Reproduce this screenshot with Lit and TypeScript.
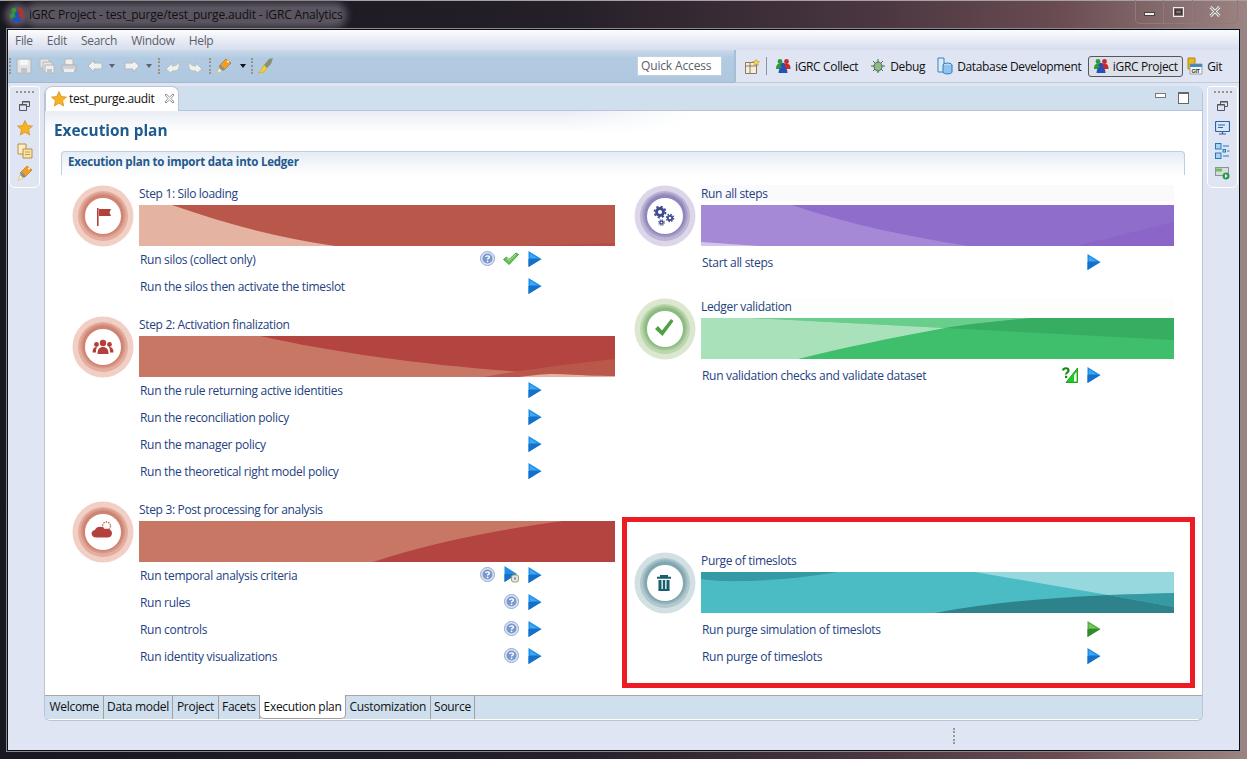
import { LitElement, html, css, svg } from "lit";
import { customElement } from "lit/decorators.js";

type Layer = [string, string];

interface Row {
  label: string;
  icons: string[];
}

interface Step {
  title: string;
  glyph: string;
  palette: string[];
  base: string;
  layers: Layer[];
  rows: Row[];
  offset?: boolean;
  tint?: string;
  push?: boolean;
}

const RED = ["#f2cfc4", "#e3ae9f", "#d99887", "#cf8373"];
const PURPLE = ["#dcd6e8", "#bdb4d6", "#a69cc8", "#8f86b9"];
const GREEN = ["#dbe8cf", "#bcd6ae", "#a3c896", "#8cbb80"];
const TEAL = ["#d2e0e4", "#b0c8ce", "#98b6bd", "#82a6ae"];

const leftSteps: Step[] = [
  {
    title: "Step 1: Silo loading",
    glyph: "flag",
    palette: RED,
    base: "#b9574a",
    layers: [
      ["#e4b3a2", "M0 0H33C90 20 140 33 196 41H0Z"],
      ["#b84b45", "M380 41L476 38V41Z"],
    ],
    rows: [
      { label: "Run silos (collect only)", icons: ["help", "check", "play"] },
      { label: "Run the silos then activate the timeslot", icons: ["", "", "play"] },
    ],
  },
  {
    title: "Step 2: Activation finalization",
    glyph: "people",
    palette: RED,
    base: "#b3443f",
    layers: [
      ["#c97765", "M0 0H121C220 22 340 36 476 41H0Z"],
      ["#b9574a", "M345 41C390 33 430 28 476 23V41Z"],
      ["#e7b3a0", "M381 41C395 39 405 38 415 38C440 39 460 40 476 40V41Z"],
    ],
    rows: [
      { label: "Run the rule returning active identities", icons: ["", "", "play"] },
      { label: "Run the reconciliation policy", icons: ["", "", "play"] },
      { label: "Run the manager policy", icons: ["", "", "play"] },
      { label: "Run the theoretical right model policy", icons: ["", "", "play"] },
    ],
  },
  {
    title: "Step 3: Post processing for analysis",
    glyph: "cloud",
    palette: RED,
    base: "#c97765",
    layers: [["#b3443f", "M234 41C290 22 360 8 425 0H476V41Z"]],
    rows: [
      { label: "Run temporal analysis criteria", icons: ["help", "temporal", "play"] },
      { label: "Run rules", icons: ["", "help", "play"] },
      { label: "Run controls", icons: ["", "help", "play"] },
      { label: "Run identity visualizations", icons: ["", "help", "play"] },
    ],
  },
];

const rightSteps: Step[] = [
  {
    title: "Run all steps",
    glyph: "gears",
    palette: PURPLE,
    base: "#8f6dcb",
    tint: "#fafafd",
    offset: true,
    layers: [
      ["#a588d6", "M0 0H91C150 20 210 32 267 41H0Z"],
      ["#d5c4ea", "M0 37L58 41H0Z"],
      ["#8b66c8", "M375 41L473 17V41Z"],
    ],
    rows: [{ label: "Start all steps", icons: ["", "", "play"] }],
  },
  {
    title: "Ledger validation",
    glyph: "tick",
    palette: GREEN,
    base: "#3fbe6b",
    tint: "#fcfefc",
    offset: true,
    layers: [
      ["#69cd8c", "M50 0H331C300 3 270 6 244 10Z"],
      ["#a9e2ba", "M0 0H50L244 10C190 20 140 30 97 41H0Z"],
      ["#37ad62", "M244 10C270 6 300 3 331 0H473V22Z"],
    ],
    rows: [{ label: "Run validation checks and validate dataset", icons: ["", "ratio", "play"] }],
  },
  {
    title: "Purge of timeslots",
    glyph: "trash",
    palette: TEAL,
    base: "#4bbcc4",
    offset: true,
    push: true,
    layers: [
      ["#369aa4", "M0 0H137C90 8 30 12 0 7Z"],
      ["#97d8de", "M274 0L407 23L473 21V0Z"],
      ["#2e828c", "M234 41C290 30 350 26 407 23L473 35V41Z"],
      ["#369aa4", "M407 23L473 21V35Z"],
    ],
    rows: [
      { label: "Run purge simulation of timeslots", icons: ["", "", "playGreen"] },
      { label: "Run purge of timeslots", icons: ["", "", "play"] },
    ],
  },
];

const PAGES = ["Welcome", "Data model", "Project", "Facets", "Execution plan", "Customization", "Source"];

const people = (size = 16) => html`<svg width=${size} height=${size} viewBox="0 0 16 16">
  <circle cx="5" cy="3.5" r="2.4" fill="#2f9a35" />
  <path d="M1 11c0-4 1.5-5.5 4-5.5S9 7 9 11z" fill="#2f9a35" />
  <circle cx="11.5" cy="3.5" r="2.4" fill="#c92a2a" />
  <path d="M8 11c0-4 1-5.5 3.5-5.5S15.500 7 15.500 11z" fill="#c92a2a" />
  <circle cx="8" cy="7" r="2.300" fill="#2450b8" />
  <path d="M3.500 15c0-4 1.500-6 4.500-6s4.500 2 4.500 6z" fill="#2450b8" />
</svg>`;

const icons: Record<string, () => unknown> = {
  play: () => html`<svg width="14" height="16" viewBox="0 0 14 16">
    <path d="M.5 0L13.500 8L.5 16z" fill="#1f8ee8" />
    <path d="M.5 8H13.500L.5 16z" fill="#1670c8" />
    <path d="M2 2.500L9 7H2z" fill="#3fa8f2" />
  </svg>`,
  playGreen: () => html`<svg width="14" height="16" viewBox="0 0 14 16">
    <path d="M.5 0L13.500 8L.5 16z" fill="#55b03f" />
    <path d="M.5 8H13.500L.5 16z" fill="#2f8a2c" />
    <path d="M2 2.500L9 7H2z" fill="#78c75c" />
  </svg>`,
  help: () => html`<svg width="15" height="15" viewBox="0 0 15 15">
    <circle cx="7.500" cy="7.500" r="7" fill="#dbe5f5" stroke="#90a8d2" />
    <circle cx="7.500" cy="7.500" r="5" fill="#7a98cc" />
    <path d="M5.600 6c.2-1.400 3.800-1.700 3.800.2 0 1.200-1.900 1.200-1.900 2.400" fill="none" stroke="#fff" stroke-width="1.400" />
    <rect x="6.800" y="9.600" width="1.500" height="1.500" fill="#fff" />
  </svg>`,
  check: () => html`<svg width="16" height="14" viewBox="0 0 16 14">
    <path d="M.5 7.500L3.500 5L6 7.500L13 1L15.500 2.500L6.200 12.500z" fill="#66c852" stroke="#3a8a35" stroke-width=".8" />
    <path d="M3.500 6L6 8.500L13 2.200" fill="none" stroke="#b2eca0" stroke-width=".8" />
  </svg>`,
  temporal: () => html`<svg width="15" height="17" viewBox="0 0 15 17">
    <path d="M.5 0L13 8L.5 16z" fill="#1f8ee8" />
    <path d="M.5 8H13L.5 16z" fill="#1670c8" />
    <rect x="7.500" y="9" width="7" height="7" rx="2" fill="#dfe5ea" stroke="#b39a55" />
    <rect x="10" y="11.500" width="2" height="2" fill="#7a93a8" />
  </svg>`,
  ratio: () => html`<svg width="16" height="16" viewBox="0 0 16 16">
    <path d="M4 15.500L15.500 1V15.500z" fill="#19d019" stroke="#128a12" stroke-width=".8" />
    <path d="M12 14.500V8L14.500 5V14.500z" fill="#fff" />
    <path d="M1 3.500C1.500 .5 6.500.5 6.500 3.500C6.500 5.500 4 5.500 4 7.500" fill="none" stroke="#128a12" stroke-width="2.200" />
    <rect x="3" y="8.800" width="2.200" height="2.200" fill="#128a12" />
  </svg>`,
};

const glyphs: Record<string, () => unknown> = {
  flag: () => svg`<rect x="25" y="23" width="1.600" height="18" fill="#b3403c" />
    <path d="M27 24H39L37.500 27.500L39 31H27z" fill="#b3403c" />`,
  people: () => svg`<g fill="#b3403c">
    <circle cx="31" cy="27" r="3.200" /><path d="M25.500 38c0-5 2-7 5.500-7s5.500 2 5.500 7z" />
    <circle cx="24.500" cy="28.500" r="2.400" /><path d="M20.500 36.500c0-3.800 1.500-5.500 4.500-5.500-.8 1.500-1 3.500-1 5.500z" />
    <circle cx="37.500" cy="28.500" r="2.400" /><path d="M41.500 36.500c0-3.800-1.500-5.500-4.500-5.500.8 1.500 1 3.500 1 5.500z" />
  </g>`,
  cloud: () => svg`<circle cx="34.500" cy="25" r="4" fill="none" stroke="#c9665c" stroke-width="1.400" stroke-dasharray="1.500 1" />
    <path d="M24.500 36.500c-6 0-6.500-7-1.500-7.500 1-3.500 7-4.500 9.500-1 4-1 7.500 1 7.500 4.200 0 2.800-2 4.300-4.500 4.300z" fill="#b3403c" />`,
  gears: () => svg`<g fill="none" stroke="#3f4a90">
    <circle cx="26" cy="27" r="3.500" stroke-width="2.800" />
    <circle cx="26" cy="27" r="5.500" stroke-width="1.800" stroke-dasharray="2.200 2.100" />
    <circle cx="36" cy="33" r="2.200" stroke-width="1.800" />
    <circle cx="36" cy="33" r="3.600" stroke-width="1.400" stroke-dasharray="1.500 1.300" />
    <circle cx="27.500" cy="37.500" r="1.600" stroke-width="1.500" />
    <circle cx="27.500" cy="37.500" r="2.800" stroke-width="1.100" stroke-dasharray="1.100 1.100" />
  </g>`,
  tick: () => svg`<path d="M21 31L24 28L28 32.500L37 21L39.500 23L28.500 38z" fill="#4fa043" />`,
  trash: () => svg`<g fill="#15606c">
    <path d="M26 23h8v1.800h-8zM23 24.800h14v2H23z" />
    <path d="M24.500 28h3v9.500h-3zM28.800 28h2.400v9.500h-2.400zM32.500 28h3v9.500h-3z" />
    <path d="M24.500 37h11v2h-11z" />
  </g>`,
};

const toolIcon = (kind: string) => {
  switch (kind) {
    case "save":
      return html`<svg width="16" height="16" viewBox="0 0 16 16"><path d="M1 1h14v14H1z" fill="#e2e4e6" stroke="#b4b6ba" /><path d="M4 2h8v5H4z" fill="#f6f6f6" /><path d="M5 10h6v5H5z" fill="#c2c4c8" /></svg>`;
    case "saveAll":
      return html`<svg width="16" height="16" viewBox="0 0 16 16"><path d="M1 1h9v9H1z" fill="#e2e4e6" stroke="#b8babc" /><path d="M4 4h9v9H4z" fill="#e2e4e6" stroke="#b8babc" /><path d="M6 7h9v8H6z" fill="#eceef0" stroke="#b4b6ba" /><path d="M8 11h5v4H8z" fill="#c2c4c8" /></svg>`;
    case "print":
      return html`<svg width="16" height="16" viewBox="0 0 16 16"><path d="M4 1h8v6H4z" fill="#f0f0f0" stroke="#b8b8b8" /><path d="M1 7h14v6H1z" fill="#d0d3d6" stroke="#b0b2b6" /><path d="M3 11h10v3H3z" fill="#eeeeee" /></svg>`;
    case "back":
      return html`<svg width="16" height="14" viewBox="0 0 16 14"><path d="M7 1L1 7l6 6V10h8V4H7z" fill="#eef0f2" stroke="#b4b8bc" /></svg>`;
    case "forward":
      return html`<svg width="16" height="14" viewBox="0 0 16 14"><path d="M9 1l6 6-6 6V10H1V4h8z" fill="#eef0f2" stroke="#b4b8bc" /></svg>`;
    case "undo":
      return html`<svg width="16" height="16" viewBox="0 0 16 16"><path d="M1 11l6-6v3c4 0 6-1 6-5 3 5 1 11-6 10v3z" fill="#eef0f2" stroke="#b8bcc0" /></svg>`;
    case "redo":
      return html`<svg width="16" height="16" viewBox="0 0 16 16"><path d="M15 11L9 5v3C5 8 3 7 3 3c-3 5-1 11 6 10v3z" fill="#eef0f2" stroke="#b8bcc0" /></svg>`;
    case "brush":
      return html`<svg width="18" height="18" viewBox="0 0 18 18"><path d="M11 2l5 4-7 7-5-4z" fill="#f0a020" stroke="#a86a10" stroke-width=".6" /><path d="M6 8l4 4-2 2-4-3z" fill="#8a8f96" /><path d="M4 11l3 3-5 2.500z" fill="#fff4c0" stroke="#c8b060" stroke-width=".5" /><circle cx="13" cy="4.500" r="1" fill="#fff" /></svg>`;
    case "pen":
      return html`<svg width="18" height="18" viewBox="0 0 18 18"><path d="M12 2l4-1-2 6-4 4-3-3z" fill="#8a9078" /><path d="M7 8l3 3-3 4-6 1c2-1 4-4 6-8z" fill="#f5d02c" stroke="#c8a010" stroke-width=".5" /></svg>`;
    case "open":
      return html`<svg width="15" height="15" viewBox="0 0 15 15"><path d="M.5 3.500h11v11H.5z" fill="#f4efe0" stroke="#8a7a5a" /><path d="M.5 7h11M5 3.500v11" stroke="#8a7a5a" /><path d="M11 .5l1.200 1.800 2.300.3-1.700 1.500.5 2.300-2.300-1.200-2 1.200.3-2.300L7.500 2.600l2.400-.3z" fill="#f7d44a" stroke="#b08a20" stroke-width=".5" /></svg>`;
    case "bug":
      return html`<svg width="16" height="16" viewBox="0 0 16 16"><path d="M8 1v14M1 8h14M3 3l10 10M13 3L3 13" stroke="#4a6a4a" /><ellipse cx="8" cy="8.500" rx="4" ry="4.500" fill="#8fb98a" stroke="#4a6a4a" /></svg>`;
    case "db":
      return html`<svg width="16" height="18" viewBox="0 0 16 18"><path d="M1 1h6v14H1z" fill="#d9ecfa" stroke="#3a80c0" /><ellipse cx="10.500" cy="8" rx="4.500" ry="2" fill="#bcdcf5" stroke="#2f78bc" /><path d="M6 8v7c0 2.500 9 2.500 9 0V8" fill="#8fc4ee" stroke="#2f78bc" /></svg>`;
    case "git":
      return html`<svg width="16" height="18" viewBox="0 0 16 18"><path d="M1 1h7v11H1z" fill="#e8b820" stroke="#b08a10" /><path d="M3 7h12v10H3z" fill="#f4f6f8" stroke="#9aa2a8" /><path d="M3 7h12v3H3z" fill="#4a8ab8" /><text x="4.500" y="15.500" font-size="5.500" font-weight="700" font-family="Liberation Sans" fill="#333">GIT</text></svg>`;
    case "restore":
      return html`<svg width="11" height="10" viewBox="0 0 11 10"><path d="M3.500 3V.5h7v5H8M.5 3.500h7v6h-7z" fill="none" stroke="#555" /><path d="M.5 4h7M3.500 1h7" stroke="#555" /></svg>`;
    case "star":
      return html`<svg width="16" height="16" viewBox="0 0 16 16"><path d="M8 .5l2.300 5 5.200.6-3.900 3.500 1.100 5.400L8 12.300 3.300 15l1.100-5.400L.5 6.100l5.200-.6z" fill="#f5b324" stroke="#d98a14" stroke-width=".7" /></svg>`;
    case "files":
      return html`<svg width="16" height="16" viewBox="0 0 16 16"><path d="M1 1h8v10H1z" fill="#fbeec8" stroke="#b89040" /><path d="M6 6h9v9H6z" fill="#f8e4a8" stroke="#b89040" /><path d="M8 9h5M8 11.500h5" stroke="#c8a050" /></svg>`;
    case "monitor":
      return html`<svg width="15" height="14" viewBox="0 0 15 14"><rect x=".5" y=".5" width="14" height="10" rx="1" fill="#dbe8f6" stroke="#2d62a8" stroke-width="1.200" /><path d="M3 4h7M3 6.500h5" stroke="#2d62a8" /><path d="M4 13h7M7.500 10.500V13" stroke="#2d62a8" stroke-width="1.200" /></svg>`;
    case "outline":
      return html`<svg width="15" height="16" viewBox="0 0 15 16"><rect x=".5" y=".5" width="5.500" height="5.500" fill="#a8d4f2" stroke="#2878b8" /><rect x=".5" y="10" width="5.500" height="5.500" fill="#a8d4f2" stroke="#2878b8" /><rect x="8" y="6.500" width="2.500" height="2.500" fill="#a8d4f2" stroke="#2878b8" /><path d="M8 3h6M12 8h2.500M8 13h6" stroke="#2878b8" /></svg>`;
    case "run":
      return html`<svg width="15" height="13" viewBox="0 0 15 13"><rect x=".5" y=".5" width="13" height="8" fill="#d8dcdc" stroke="#8a9494" /><path d="M1 1.500h6v3H1z" fill="#6cc060" /><circle cx="11" cy="9" r="3.500" fill="#2f9a4a" /><path d="M10 7l2.500 2-2.500 2z" fill="#fff" /></svg>`;
  }
  return null;
};

@customElement("app-root")
export class AppRoot extends LitElement {
  static styles = css`
    :host {
      display: block;
      width: 1247px;
      height: 759px;
      overflow: hidden;
      font-family: "Open Sans", "Liberation Sans", sans-serif;
      font-size: 12px;
      position: relative;
      background: linear-gradient(90deg, #17171f 0%, #241f29 45%, #4a3640 70%, #6a4c52 85%, #9c8482 100%);
    }
    .frame {
      display: flex;
      flex-direction: column;
      height: 759px;
      box-shadow: inset 0 1px #a8a0a4;
    }
    .titlebar {
      height: 29px;
      flex: none;
      display: flex;
      align-items: center;
      padding: 0 9px 0 9px;
      gap: 4px;
    }
    .app-title {
      color: #111;
      background: #5a5560;
      box-shadow: 0 0 7px 5px #5a5560;
      border-radius: 8px;
      line-height: 16px;
      letter-spacing: -0.16px;
    }
    .title-logo {
      display: flex;
      background: #5a5560;
      box-shadow: 0 0 6px 4px #5a5560;
      border-radius: 8px;
    }
    .winbtns {
      margin-left: auto;
      display: flex;
      align-self: flex-start;
      height: 23px;
      border: 1px solid #8d7a7c;
      border-top: 0;
      border-radius: 0 0 5px 5px;
    }
    .winbtns span {
      display: flex;
      align-items: center;
      justify-content: center;
      border-right: 1px solid #8d7a7c;
      height: 100%;
    }
    .winbtns span:last-child {
      border-right: 0;
    }
    .window {
      flex: 1;
      margin: 0 7px 8px;
      background: #dfe5f3;
      border: 1px solid #0c0c10;
      display: flex;
      flex-direction: column;
      box-shadow: 0 0 0 1px #8c8890;
    }
    .menubar {
      height: 20px;
      flex: none;
      display: flex;
      align-items: center;
      gap: 14px;
      padding-left: 7px;
      color: #5c5f68;
      letter-spacing: -0.3px;
      background: linear-gradient(#fbfcfe, #d7dded);
    }
    .toolrow {
      height: 33px;
      flex: none;
      display: flex;
    }
    .toolbar {
      width: 726px;
      flex: none;
      display: flex;
      align-items: center;
      background: linear-gradient(#c9d9e8 0, #b2cbe2 25%, #afc8e0 100%);
      border-bottom: 1px solid #a8b8cc;
      position: relative;
    }
    .grip {
      width: 0;
      height: 16px;
      border-left: 2px dotted #98938a;
      flex: none;
    }
    .tslot {
      flex: none;
      display: flex;
      justify-content: center;
    }
    .drop {
      width: 0;
      height: 0;
      border: 3.500px solid transparent;
      border-top: 4px solid #5c6470;
      border-bottom: 0;
      flex: none;
    }
    .drop.black {
      border-top-color: #111;
    }
    .gap {
      flex: none;
    }
    .quick {
      width: 85px;
      height: 20px;
      box-sizing: border-box;
      background: #fff;
      border: 1px solid #c4d0dc;
      color: #5a6068;
      line-height: 18px;
      padding-left: 3px;
      letter-spacing: -0.15px;
      margin-left: auto;
      margin-right: 12px;
    }
    .perspectives {
      flex: 1;
      display: flex;
      align-items: center;
      padding-left: 9px;
      border-bottom: 1px solid #c0cbdc;
      border-left: 2px solid #a8bdd6;
      color: #111;
      letter-spacing: -0.35px;
    }
    .persp {
      display: flex;
      align-items: center;
      gap: 4px;
      height: 21px;
      box-sizing: border-box;
      white-space: nowrap;
    }
    .persp.on {
      background: #dde2ea;
      border: 1px solid #55585c;
      border-radius: 3px;
      padding: 0 4.500px 0 3.500px;
    }
    .vsep {
      width: 1px;
      height: 18px;
      background: #8b96a6;
      margin: 0 8px 0 6px;
    }
    .body {
      flex: 1;
      display: flex;
      padding: 3px 1px 0 1px;
      min-height: 0;
    }
    .trim {
      width: 31px;
      height: 102px;
      flex: none;
      box-sizing: border-box;
      border: 1px solid #fff;
      border-radius: 3px 3px 6px 6px;
      display: flex;
      flex-direction: column;
      align-items: center;
      padding-top: 4px;
    }
    .trim .dots {
      width: 18px;
      height: 0;
      border-top: 2px dotted #9a968e;
      margin-bottom: 6px;
    }
    .trim .cell {
      height: 22.500px;
      flex: none;
      display: flex;
      align-items: center;
    }
    .trim .cell.small {
      height: 14px;
      margin-bottom: 4px;
    }
    .trim.left {
      margin-right: 4px;
    }
    .trim.right {
      margin-left: 4px;
    }
    .center {
      flex: 1;
      display: flex;
      flex-direction: column;
      min-width: 0;
    }
    .editor {
      height: 635px;
      flex: none;
      box-sizing: border-box;
      display: flex;
      flex-direction: column;
      border: 1px solid #b9c4d6;
      border-width: 0 1px 1px 1px;
      border-radius: 8px 8px 6px 6px;
      background: #fff;
      padding-bottom: 1px;
      overflow: hidden;
    }
    .tabs {
      height: 25px;
      flex: none;
      display: flex;
      align-items: flex-end;
      background: #cfdfed;
      border-bottom: 1px solid #b9c4d6;
      box-sizing: border-box;
    }
    .tab {
      width: 134px;
      box-sizing: border-box;
      height: 25px;
      margin-bottom: -1px;
      display: flex;
      align-items: center;
      gap: 2px;
      padding: 0 0 1px 5px;
      color: #111;
      background: #fff;
      border: 1px solid #b9c4d6;
      border-bottom: 0;
      border-radius: 7px 7px 0 0;
      letter-spacing: -0.35px;
      flex: none;
    }
    .tab .close {
      margin-left: 8px;
      display: flex;
    }
    .viewbtns {
      margin-left: auto;
      align-self: center;
      display: flex;
      gap: 12px;
      padding-right: 13px;
      align-items: center;
    }
    .min {
      width: 9px;
      height: 3px;
      border: 1px solid #777;
      background: #fff;
      margin-top: -6px;
    }
    .max {
      width: 9px;
      height: 9px;
      border: 1px solid #666;
      border-top-width: 2px;
      background: #fff;
    }
    .page {
      flex: 1;
      min-height: 0;
    }
    .heading {
      height: 39px;
      box-sizing: border-box;
      padding: 10px 0 0 9px;
      font-size: 15.400px;
      line-height: 20px;
      font-weight: 700;
      color: #1d5a8e;
      background: linear-gradient(180deg, #e9edf4 0%, #fff 55%);
      -webkit-mask-image: linear-gradient(90deg, #000 0, #000 45%, transparent 56%);
      mask-image: linear-gradient(90deg, #000 0, #000 45%, transparent 56%);
    }
    .heading-text {
      margin: 0;
      font: inherit;
    }
    .plan {
      margin: 1px 17px 0 16px;
    }
    .plan-head {
      height: 24px;
      box-sizing: border-box;
      padding: 1px 0 0 6px;
      line-height: 18px;
      font-size: 11.500px;
      font-weight: 700;
      color: #1d5a8e;
      border: 1px solid #bfcfe0;
      border-bottom: 0;
      border-radius: 4px 4px 0 0;
      background: linear-gradient(#e6ecf4, #fff);
      letter-spacing: -0.22px;
    }
    .columns {
      display: grid;
      grid-template-columns: 543px 540px;
      column-gap: 19px;
      padding: 10px 0 0 11px;
    }
    .column {
      display: flex;
      flex-direction: column;
      gap: 16px;
      height: 485px;
    }
    .column.right {
      gap: 22px;
    }
    .step {
      display: grid;
      grid-template-columns: 62px 1fr;
      column-gap: 5px;
    }
    .step.push {
      margin-top: auto;
    }
    .badge {
      width: 62px;
      height: 62px;
      display: block;
    }
    .step-title {
      height: 16px;
      line-height: 18px;
      margin-bottom: 4px;
      color: #24417f;
      letter-spacing: -0.33px;
    }
    .banner {
      display: block;
      width: 100%;
      height: 41px;
    }
    .rows.offset {
      margin-top: 3px;
    }
    .row {
      height: 27px;
      display: flex;
      align-items: center;
      padding: 0 68px 0 1px;
      color: #24417f;
      letter-spacing: -0.3px;
    }
    .actions {
      margin-left: auto;
      margin-top: -2px;
      display: flex;
    }
    .slot {
      width: 24px;
      height: 17px;
      display: flex;
      align-items: center;
      justify-content: center;
    }
    .pages {
      height: 24px;
      flex: none;
      display: flex;
      background: #cfdfed;
      padding-left: 1px;
      color: #111;
      border-top: 1px solid #a8a8a8;
      box-sizing: border-box;
    }
    .pg {
      padding: 0 3.500px;
      line-height: 22px;
      border-right: 1px solid #a0a0a0;
      letter-spacing: -0.3px;
    }
    .pg.on {
      background: #fff;
      margin-top: -1px;
      line-height: 24px;
      border-left: 1px solid #a0a0a0;
      border-bottom: 1px solid #a0a0a0;
      border-radius: 0 0 5px 5px;
      height: 24px;
      margin-left: -1px;
      box-sizing: border-box;
    }
    .status {
      flex: 1;
      display: flex;
      align-items: center;
      padding-left: 909px;
    }
    .sash {
      height: 16px;
      width: 0;
      border-left: 2px dotted #9a9a94;
    }
    .highlight {
      position: absolute;
      left: 622px;
      top: 517px;
      width: 573px;
      height: 171px;
      box-sizing: border-box;
      border: 5px solid #ed1c24;
      pointer-events: none;
    }
  `;

  private badge(step: Step) {
    const p = step.palette;
    return html`<svg class="badge" viewBox="0 0 62 62">
      <circle cx="31" cy="31" r="30.500" fill=${p[0]} />
      <circle cx="31" cy="31" r="25" fill=${p[1]} />
      <circle cx="31" cy="30" r="22.500" fill=${p[2]} />
      <circle cx="31" cy="30" r="20.500" fill=${p[3]} />
      <circle cx="31" cy="31" r="18" fill="#fff" />
      ${glyphs[step.glyph]()}
    </svg>`;
  }

  private renderStep(step: Step) {
    return html`<section class="step ${step.push ? "push" : ""}">
      ${this.badge(step)}
      <div>
        <div class="step-title" style=${step.tint ? `background:${step.tint}` : ""}>${step.title}</div>
        <svg class="banner" viewBox="0 0 ${step.offset ? 473 : 476} 41" preserveAspectRatio="none">
          <rect width="476" height="41" fill=${step.base} />
          ${step.layers.map((l) => svg`<path fill=${l[0]} d=${l[1]} />`)}
        </svg>
        <div class="rows ${step.offset ? "offset" : ""}">
          ${step.rows.map(
            (r) => html`<div class="row">
              <span>${r.label}</span>
              <div class="actions">
                ${r.icons.map((i) => html`<span class="slot">${i ? icons[i]() : ""}</span>`)}
              </div>
            </div>`
          )}
        </div>
      </div>
    </section>`;
  }

  private tool(kind: string, width: number) {
    return html`<span class="tslot" style="width:${width}px">${toolIcon(kind)}</span>`;
  }

  private gap(width: number) {
    return html`<span class="gap" style="width:${width}px"></span>`;
  }

  render() {
    return html`<div class="frame">
        <div class="titlebar">
          <span class="title-logo">${people(16)}</span>
          <span class="app-title">iGRC Project - test_purge/test_purge.audit - iGRC Analytics</span>
          <div class="winbtns">
            <span style="width:27px">
              <svg width="11" height="8"><rect x=".5" y="4.500" width="10" height="3" fill="#f4f0f0" stroke="#444" /></svg>
            </span>
            <span style="width:28px">
              <svg width="11" height="10"><rect x=".5" y=".5" width="10" height="9" fill="none" stroke="#eee" /><rect x="2.500" y="3" width="6" height="4" fill="none" stroke="#333" stroke-width="1.500" /></svg>
            </span>
            <span style="width:44px">
              <svg width="12" height="11"><path d="M1.500 1L10.500 10M10.500 1L1.500 10" stroke="#eee" stroke-width="3" /><path d="M1.500 1L10.500 10M10.500 1L1.500 10" stroke="#555" stroke-width="1" /></svg>
            </span>
          </div>
        </div>
        <div class="window">
          <div class="menubar">
            <span>File</span><span>Edit</span><span>Search</span><span>Window</span><span>Help</span>
          </div>
          <div class="toolrow">
            <div class="toolbar">
              <span class="grip" style="margin-left:1px"></span>
              ${this.gap(2)}${this.tool("save", 22)}${this.tool("saveAll", 23)}${this.tool("print", 22)}
              ${this.gap(4)}${this.tool("back", 22)}${this.gap(3)}<span class="drop"></span>
              ${this.gap(6)}${this.tool("forward", 22)}${this.gap(3)}<span class="drop"></span>
              ${this.gap(6)}<span class="grip"></span>
              ${this.gap(2)}${this.tool("undo", 22)}${this.tool("redo", 22)}
              ${this.gap(3)}<span class="grip"></span>
              ${this.gap(1)}${this.tool("brush", 24)}${this.gap(4)}<span class="drop black"></span>
              ${this.gap(5)}<span class="grip"></span>
              ${this.gap(2)}${this.tool("pen", 22)}
              <div class="quick">Quick Access</div>
            </div>
            <div class="perspectives">
              ${toolIcon("open")}
              <span class="vsep"></span>
              <span class="persp">${people(16)}iGRC Collect</span>
              ${this.gap(12)}
              <span class="persp">${toolIcon("bug")}Debug</span>
              ${this.gap(12)}
              <span class="persp">${toolIcon("db")}Database Development</span>
              ${this.gap(7)}
              <span class="persp on">${people(16)}iGRC Project</span>
              ${this.gap(4)}
              <span class="persp">${toolIcon("git")}Git</span>
            </div>
          </div>
          <div class="body">
            <div class="trim left">
              <div class="dots"></div>
              <div class="cell small">${toolIcon("restore")}</div>
              <div class="cell">${toolIcon("star")}</div>
              <div class="cell">${toolIcon("files")}</div>
              <div class="cell">${toolIcon("brush")}</div>
            </div>
            <div class="center">
              <div class="editor">
                <div class="tabs">
                  <div class="tab">
                    ${toolIcon("star")}<span>test_purge.audit</span>
                    <span class="close">
                      <svg width="11" height="11"><path d="M2 1l3.500 3L9 1l1 1-3 3.500 3 3.500-1 1-3.500-3L2 10l-1-1 3-3.500L1 2z" fill="#fff" stroke="#777" stroke-width=".8" /></svg>
                    </span>
                  </div>
                  <div class="viewbtns"><span class="min"></span><span class="max"></span></div>
                </div>
                <div class="page">
                  <div class="heading"><h1 class="heading-text">Execution plan</h1></div>
                  <div class="plan">
                    <div class="plan-head">Execution plan to import data into Ledger</div>
                    <div class="columns">
                      <div class="column">${leftSteps.map((s) => this.renderStep(s))}</div>
                      <div class="column right">${rightSteps.map((s) => this.renderStep(s))}</div>
                    </div>
                  </div>
                </div>
                <div class="pages">
                  ${PAGES.map((p) => html`<span class="pg ${p === "Execution plan" ? "on" : ""}">${p}</span>`)}
                </div>
              </div>
              <div class="status"><span class="sash"></span></div>
            </div>
            <div class="trim right">
              <div class="dots"></div>
              <div class="cell small">${toolIcon("restore")}</div>
              <div class="cell">${toolIcon("monitor")}</div>
              <div class="cell">${toolIcon("outline")}</div>
              <div class="cell">${toolIcon("run")}</div>
            </div>
          </div>
        </div>
      </div>
      <div class="highlight"></div>`;
  }
}
